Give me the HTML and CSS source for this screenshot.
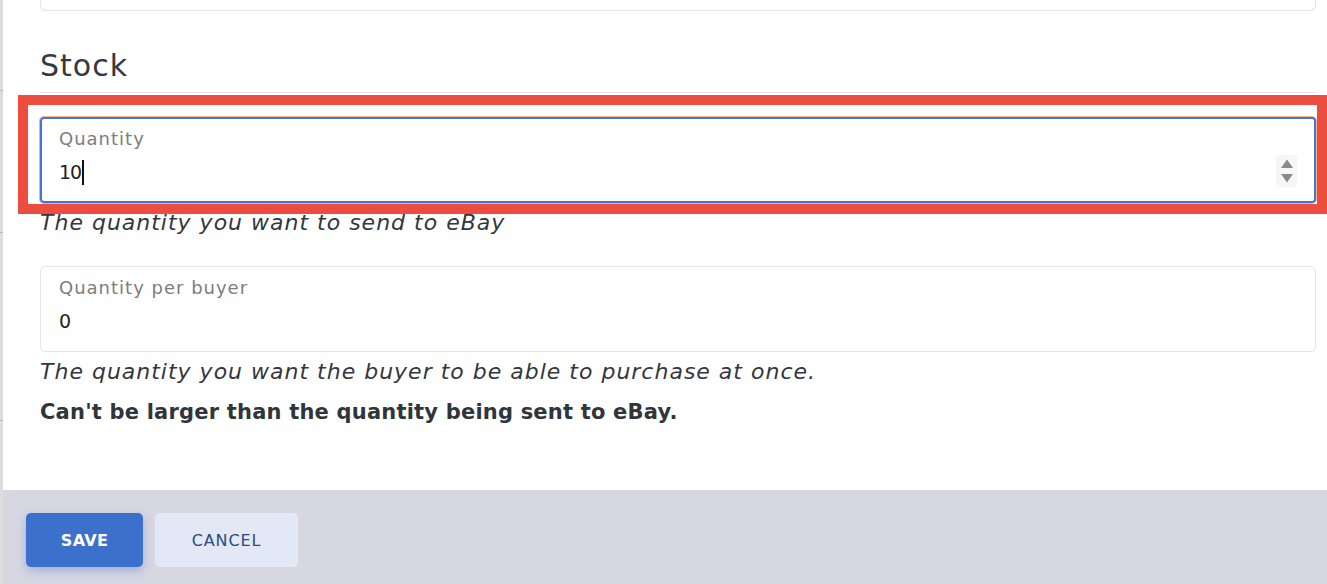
FILE: index.html
```html
<!DOCTYPE html>
<html lang="en">
<head>
<meta charset="utf-8">
<title>Stock</title>
<link rel="stylesheet" href="styles.css">
</head>
<body>
<div class="page">
  <div class="backdrop-strip">
    <span class="tick t1"></span>
    <span class="tick t2"></span>
    <span class="tick t3"></span>
  </div>
  <div class="modal">
    <div class="modal-body">
      <div class="prev-card"></div>
      <h2 class="section-title">Stock</h2>
      <div class="field focused">
        <div class="field-inner">
          <label class="field-label">Quantity</label>
          <div class="field-value">10<span class="caret"></span></div>
        </div>
        <div class="spinner">
          <svg width="14" height="28" viewBox="0 0 14 28"><path d="M7 2.5 L13 11 L1 11 Z" fill="#8a8a8a"/><path d="M1 17 L13 17 L7 25.5 Z" fill="#8a8a8a"/></svg>
        </div>
      </div>
      <p class="help">The quantity you want to send to eBay</p>
      <div class="field">
        <div class="field-inner">
          <label class="field-label">Quantity per buyer</label>
          <div class="field-value">0</div>
        </div>
      </div>
      <p class="help">The quantity you want the buyer to be able to purchase at once.</p>
      <p class="help strong">Can't be larger than the quantity being sent to eBay.</p>
    </div>
    <div class="modal-footer">
      <button class="btn btn-primary">SAVE</button>
      <button class="btn btn-secondary">CANCEL</button>
    </div>
  </div>
  <div class="highlight"></div>
</div>
</body>
</html>
```
FILE: styles.css
```css
* { box-sizing: border-box; }
html, body { margin: 0; padding: 0; }
body {
  width: 1327px;
  height: 584px;
  overflow: hidden;
  font-family: "DejaVu Sans", "Liberation Sans", sans-serif;
  color: #2f3338;
  background: #d9d9d9;
}
.page {
  position: relative;
  display: flex;
  height: 584px;
}
.backdrop-strip {
  width: 3px;
  background: #dcdcdc;
  position: relative;
  flex: none;
}
.tick {
  position: absolute;
  left: 0;
  width: 3px;
  height: 1px;
  background: #b8b8b8;
}
.t1 { top: 90px; }
.t2 { top: 232px; }
.t3 { top: 420px; }
.modal {
  flex: 1;
  display: flex;
  flex-direction: column;
  background: #ffffff;
}
.modal-body {
  flex: 1;
  padding: 0 11px 0 37px;
}
.prev-card {
  height: 11px;
  border: 1px solid #e4e4e4;
  border-top: none;
  border-radius: 0 0 6px 6px;
}
.section-title {
  margin: 35px 0 0;
  font-size: 30px;
  line-height: 40px;
  font-weight: 500;
  letter-spacing: 1px;
  color: #333a42;
  padding-bottom: 6px;
  border-bottom: 1px solid #e2e4e8;
}
.field {
  display: flex;
  align-items: center;
  height: 86px;
  border: 1px solid #e6e6e6;
  border-radius: 5px;
  padding: 0 20px 0 18px;
}
.field.focused {
  margin-top: 24px;
  border: 2px solid #4675d2;
  border-radius: 4px;
  box-shadow: 0 0 0 1px #f4b28a;
  padding-left: 17px;
  padding-right: 17px;
}
.field-inner {
  flex: 1;
  display: flex;
  flex-direction: column;
  padding-bottom: 8px;
}
.field-label {
  font-size: 18px;
  line-height: 28px;
  color: #7d7d7d;
  letter-spacing: 1px;
}
.field-value {
  font-size: 19px;
  line-height: 30px;
  margin-top: 4px;
  color: #222;
  letter-spacing: -1px;
  display: flex;
  align-items: center;
}
.caret {
  display: inline-block;
  width: 2px;
  height: 25px;
  background: #111;
  margin-left: 1px;
}
.spinner {
  align-self: flex-end;
  margin-bottom: 14px;
  width: 21px;
  height: 32px;
  background: #f6f6f6;
  display: flex;
  align-items: center;
  justify-content: center;
}
.help {
  margin: 0;
  font-size: 22px;
  line-height: 40px;
  font-style: italic;
  letter-spacing: 1px;
  color: #33373c;
}
.help + .field { margin-top: 23px; }
.help.strong {
  font-style: normal;
  font-weight: 700;
  font-size: 21px;
  letter-spacing: 0.2px;
  color: #30353b;
}
.modal-footer {
  height: 94px;
  background: #d7d7e1;
  display: flex;
  align-items: flex-start;
  gap: 12px;
  padding: 23px 0 0 23px;
}
.btn {
  height: 54px;
  border: none;
  border-radius: 5px;
  font-family: "DejaVu Sans", "Liberation Sans", sans-serif;
  font-size: 16px;
  font-weight: 700;
  letter-spacing: 0.3px;
  cursor: pointer;
}
.btn-primary {
  width: 117px;
  background: #3b70cd;
  color: #ffffff;
  box-shadow: 0 4px 10px rgba(59, 112, 205, 0.35);
}
.btn-secondary {
  width: 143px;
  background: #e2e8f5;
  color: #2c4a7e;
  font-weight: 400;
  letter-spacing: 0.9px;
}
.highlight {
  position: absolute;
  left: 18px;
  top: 95px;
  width: 1309px;
  height: 119px;
  border: 10px solid #ec4d3f;
  pointer-events: none;
}
```
